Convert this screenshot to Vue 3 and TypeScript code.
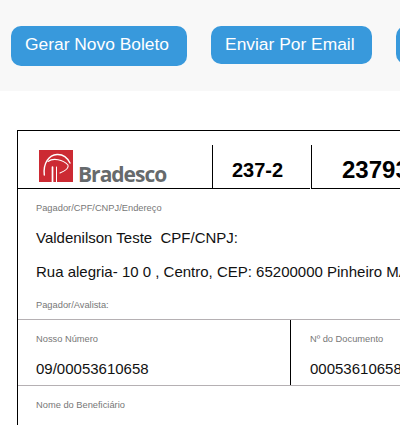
<script setup lang="ts">
const actions = [
  { label: 'Gerar Novo Boleto', cls: 'tall' },
  { label: 'Enviar Por Email', cls: 'mid' },
  { label: 'Imprimir', cls: 'mid' },
]
</script>

<template>
  <div class="page">
    <div class="toolbar">
      <button v-for="a in actions" :key="a.label" class="btn" :class="a.cls">{{ a.label }}</button>
    </div>
    <div class="boleto">
      <div class="head">
        <div class="logo">
          <svg class="mark" viewBox="0 0 34 32" width="34" height="32" aria-hidden="true">
            <rect width="34" height="32" fill="#cc2a33" />
            <g fill="none" stroke="#fff" stroke-linecap="round">
              <path d="M5.300 25C4 13 10 5 18 4.500C23 4.200 28 7 31 13" stroke-width="1.400" />
              <path d="M9 11.500C14 7.500 24 9.500 29 15C30 18 26 21 21 23" stroke-width="1.100" />
              <path d="M13.500 17V32" stroke-width="1.700" />
              <path d="M17.500 17V32" stroke-width="1" />
            </g>
          </svg>
          <span class="brand">Bradesco</span>
        </div>
        <div class="bank">237-2</div>
        <div class="line-code">23793.38128 60000.000005 36000.063303 1 00000000000000</div>
      </div>

      <div class="section">
        <div class="label">Pagador/CPF/CNPJ/Endereço</div>
        <div class="value first">Valdenilson Teste&nbsp; CPF/CNPJ:</div>
        <div class="value second">Rua alegria- 10 0 , Centro, CEP: 65200000 Pinheiro MA</div>
        <div class="label third">Pagador/Avalista:</div>
      </div>

      <div class="cols">
        <div class="col col-a">
          <div class="label">Nosso Número</div>
          <div class="value num">09/00053610658</div>
        </div>
        <div class="col col-b">
          <div class="label">Nº do Documento</div>
          <div class="value num">00053610658</div>
        </div>
      </div>

      <div class="section last">
        <div class="label">Nome do Beneficiário</div>
      </div>
    </div>
  </div>
</template>

<style>
html, body { margin: 0; overflow: hidden; background: #fff; }
</style>

<style scoped>
.page {
  width: 400px;
  height: 425px;
  overflow: hidden;
  font-family: "Liberation Sans", Arial, sans-serif;
}
.toolbar {
  width: 800px;
  height: 91px;
  box-sizing: border-box;
  padding: 26px 0 0 11px;
  background: #f8f8f8;
  display: flex;
  align-items: flex-start;
  gap: 24px;
}
.btn {
  border: 0;
  margin: 0;
  padding: 8px 17px 10px 14px;
  border-radius: 10px;
  background: #3899dc;
  color: #fff;
  font: 17.4px/20px "Liberation Sans", Arial, sans-serif;
  white-space: nowrap;
}
.btn.tall { padding-bottom: 12px; padding-right: 18px; }
.boleto {
  width: 760px;
  margin: 39px 0 0 17px;
  border-top: 1px solid #000;
  border-left: 1px solid #000;
  box-sizing: border-box;
}
.head {
  height: 58px;
  display: flex;
  align-items: flex-end;
}
.logo {
  width: 194px;
  height: 44px;
  box-sizing: border-box;
  padding-left: 21px;
  display: flex;
  align-items: flex-end;
  gap: 5px;
  flex: none;
  border-bottom: 1px solid #000;
}
.mark { flex: none; margin-bottom: 6px; }
.brand {
  font-family: "Open Sans", sans-serif;
  font-weight: 700;
  font-size: 21px;
  line-height: 21px;
  letter-spacing: -1px;
  color: #666a6c;
  margin-bottom: 3px;
}
.bank {
  width: 98px;
  height: 44px;
  flex: none;
  box-sizing: border-box;
  border-left: 1px solid #000;
  border-bottom: 1px solid #000;
  padding-left: 19px;
  font-weight: 700;
  font-size: 20px;
  line-height: 50px;
  color: #000;
}
.line-code {
  flex: none;
  width: 600px;
  height: 44px;
  box-sizing: border-box;
  margin-left: 1px;
  border-left: 1px solid #000;
  border-bottom: 1px solid #000;
  padding-left: 30px;
  font-weight: 700;
  font-size: 24px;
  line-height: 50px;
  white-space: nowrap;
  color: #000;
}
.section { padding: 13px 0 0 18px; box-sizing: border-box; }
.label {
  font-size: 9.3px;
  line-height: 12px;
  color: #777;
  white-space: nowrap;
}
.value {
  font-size: 15px;
  line-height: 18px;
  color: #111;
  white-space: nowrap;
}
.first { margin-top: 15px; }
.second { margin-top: 16px; }
.third { margin-top: 18px; padding-bottom: 8px; }
.cols {
  display: flex;
  height: 67px;
  border-top: 1px solid #b5b0b3;
  border-bottom: 1px solid #b5b0b3;
  box-sizing: border-box;
}
.col { padding: 13px 0 0 18px; box-sizing: border-box; flex: none; }
.col-a { width: 273px; border-right: 1px solid #000; }
.col-b { padding-left: 19px; }
.num { margin-top: 15px; }
.last { height: 60px; padding-top: 13px; }
</style>
